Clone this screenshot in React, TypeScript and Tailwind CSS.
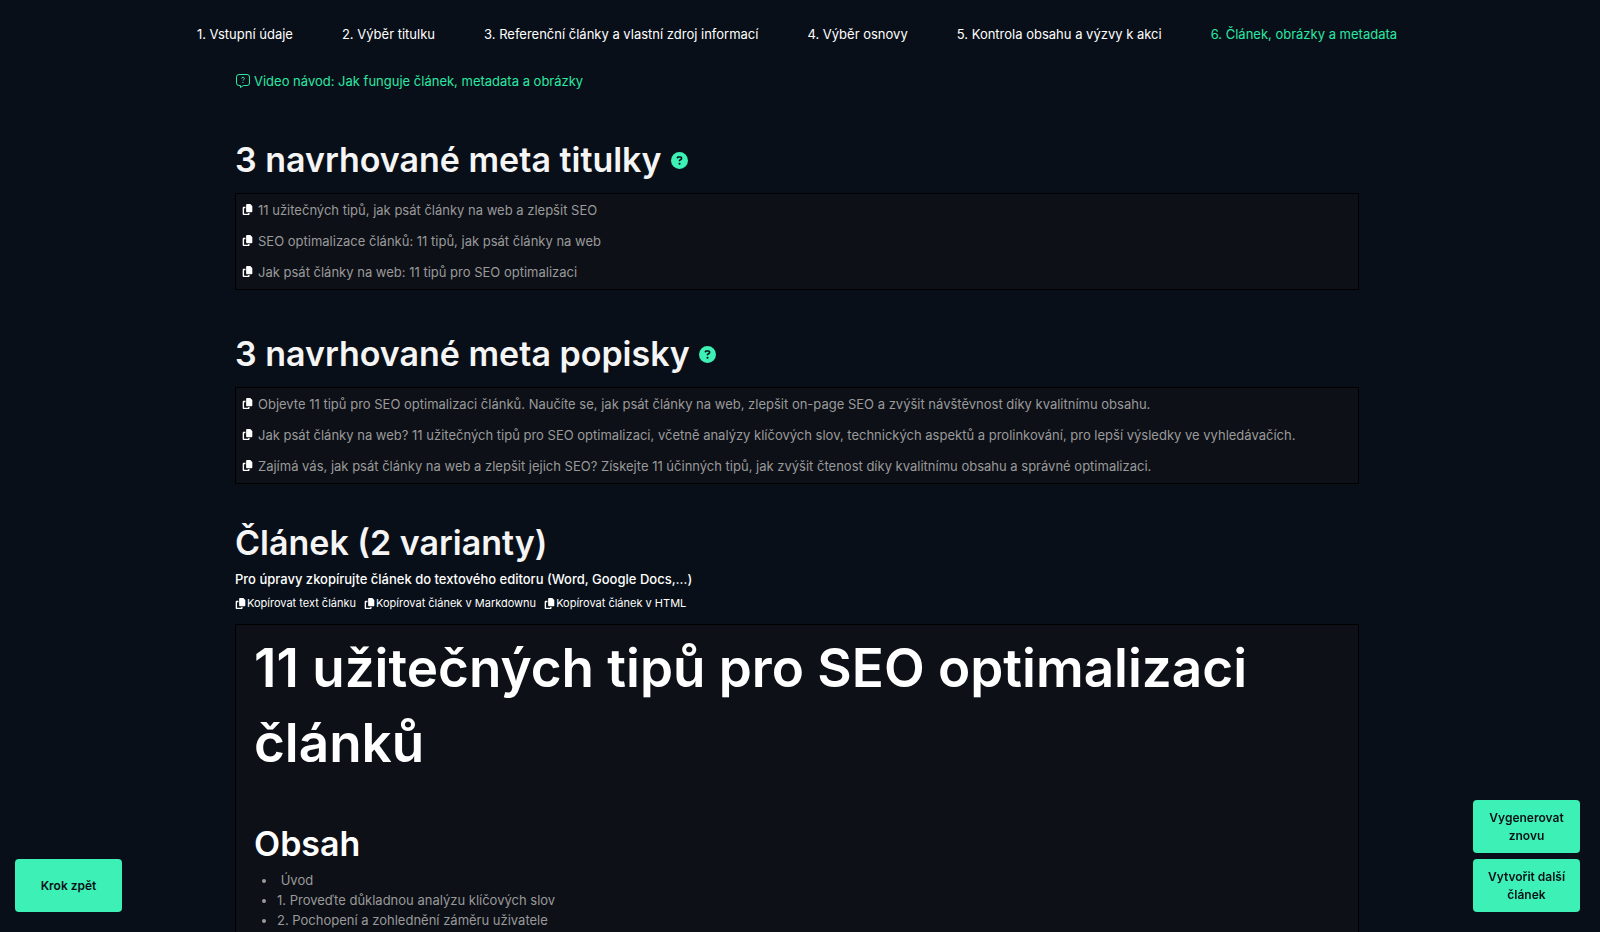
import type { ReactNode } from 'react';
import { FaCircleQuestion, FaCopy } from 'react-icons/fa6';

const steps = [
  '1. Vstupní údaje',
  '2. Výběr titulku',
  '3. Referenční články a vlastní zdroj informací',
  '4. Výběr osnovy',
  '5. Kontrola obsahu a výzvy k akci',
  '6. Článek, obrázky a metadata',
];

const metaTitles = [
  '11 užitečných tipů, jak psát články na web a zlepšit SEO',
  'SEO optimalizace článků: 11 tipů, jak psát články na web',
  'Jak psát články na web: 11 tipů pro SEO optimalizaci',
];

const metaDescriptions = [
  'Objevte 11 tipů pro SEO optimalizaci článků. Naučíte se, jak psát články na web, zlepšit on-page SEO a zvýšit návštěvnost díky kvalitnímu obsahu.',
  'Jak psát články na web? 11 užitečných tipů pro SEO optimalizaci, včetně analýzy klíčových slov, technických aspektů a prolinkování, pro lepší výsledky ve vyhledávačích.',
  'Zajímá vás, jak psát články na web a zlepšit jejich SEO? Získejte 11 účinných tipů, jak zvýšit čtenost díky kvalitnímu obsahu a správné optimalizaci.',
];

const copyActions = ['Kopírovat text článku', 'Kopírovat článek v Markdownu', 'Kopírovat článek v HTML'];

const contents = ['\u00a0Úvod', '1. Proveďte důkladnou analýzu klíčových slov', '2. Pochopení a zohlednění záměru uživatele'];

function HelpBubble() {
  return (
    <svg viewBox="0 0 16 16" className="size-4" fill="none" stroke="currentColor" aria-hidden="true">
      <path d="M4 1.5h8a2.500 2.500 0 0 1 2.500 2.500v6a2.500 2.500 0 0 1-2.500 2.500H8.500L5.500 14.500v-2H4a2.500 2.500 0 0 1-2.500-2.500V4A2.500 2.500 0 0 1 4 1.500Z" />
      <path d="M6.600 5.500c0-1.700 2.800-1.700 2.800 0 0 1.100-1.400 1-1.400 2.200M8 9v1" />
    </svg>
  );
}

function MetaSection({ title, items }: { title: string; items: string[] }) {
  return (
    <section>
      <div className="flex items-center gap-[9px]">
        <h2 className="text-[34px] leading-[50px] font-semibold text-neutral-100">{title}</h2>
        <button type="button" aria-label="Nápověda" className="text-[#3df0b5]">
          <FaCircleQuestion className="size-[17px]" />
        </button>
      </div>
      <ul className="mt-2 border border-black bg-[#0d1017] pb-0.5">
        {items.map((item) => (
          <li key={item} className="flex min-h-[31px] items-center gap-[5px] px-[6px]">
            <button type="button" aria-label="Kopírovat" className="text-white">
              <FaCopy className="size-[11px]" />
            </button>
            <span className="text-[13px] leading-5 text-[#9a9a9a]">{item}</span>
          </li>
        ))}
      </ul>
    </section>
  );
}

function ActionButton({ children }: { children: ReactNode }) {
  return (
    <button
      type="button"
      className="h-[53px] w-[107px] rounded-sm bg-[#3df0b5] px-2 text-xs leading-[18px] font-semibold text-[#0a1018] hover:bg-[#2fd9a1]"
    >
      {children}
    </button>
  );
}

export default function App() {
  return (
    <div className="flex min-h-screen flex-col bg-[#090f18] pr-[6px] font-['Inter',sans-serif] text-white">
      <nav className="flex justify-center gap-[49px] pt-6 text-[13px] leading-5">
        {steps.map((step, i) => (
          <a key={step} href="#" className={i === 5 ? 'text-[#2be8a4]' : 'hover:text-[#2be8a4]'}>
            {step}
          </a>
        ))}
      </nav>

      <main className="mx-auto flex w-full max-w-[1124px] flex-1 flex-col">
        <a href="#" className="mt-[27px] flex items-center gap-[3px] self-start text-[13px] leading-5 text-[#2be8a4]">
          <HelpBubble />
          Video návod: Jak funguje článek, metadata a obrázky
        </a>

        {/* Meta suggestions */}
        <div className="mt-11 flex flex-col gap-[39px]">
          <MetaSection title="3 navrhované meta titulky" items={metaTitles} />
          <MetaSection title="3 navrhované meta popisky" items={metaDescriptions} />
        </div>

        {/* Article */}
        <section className="mt-[34px] flex flex-1 flex-col">
          <h2 className="text-[34px] leading-[50px] font-semibold text-neutral-100">Článek (2 varianty)</h2>
          <p className="mt-px text-[13px] leading-5 font-medium">
            Pro úpravy zkopírujte článek do textového editoru (Word, Google Docs,…)
          </p>
          <div className="mt-1 flex gap-2">
            {copyActions.map((label) => (
              <button key={label} type="button" className="flex items-center gap-px text-[11px] leading-5">
                <FaCopy className="size-[11px]" />
                {label}
              </button>
            ))}
          </div>

          <article className="mt-[11px] flex-1 border border-b-0 border-black bg-[#0d1017] px-[18px] pt-[6px]">
            <h1 className="text-[53px] leading-[75px] font-semibold">11 užitečných tipů pro SEO optimalizaci článků</h1>
            <h2 className="mt-[38px] text-[34px] leading-[50px] font-semibold">Obsah</h2>
            <ul className="mt-px list-disc pl-[23px] text-[13px] leading-5 text-[#9a9a9a]">
              {contents.map((item) => (
                <li key={item}>{item}</li>
              ))}
            </ul>
          </article>
        </section>
      </main>

      <div className="fixed bottom-5 left-[15px]">
        <ActionButton>Krok zpět</ActionButton>
      </div>
      <div className="fixed right-5 bottom-5 flex flex-col gap-[6px]">
        <ActionButton>Vygenerovat znovu</ActionButton>
        <ActionButton>Vytvořit další článek</ActionButton>
      </div>
    </div>
  );
}
